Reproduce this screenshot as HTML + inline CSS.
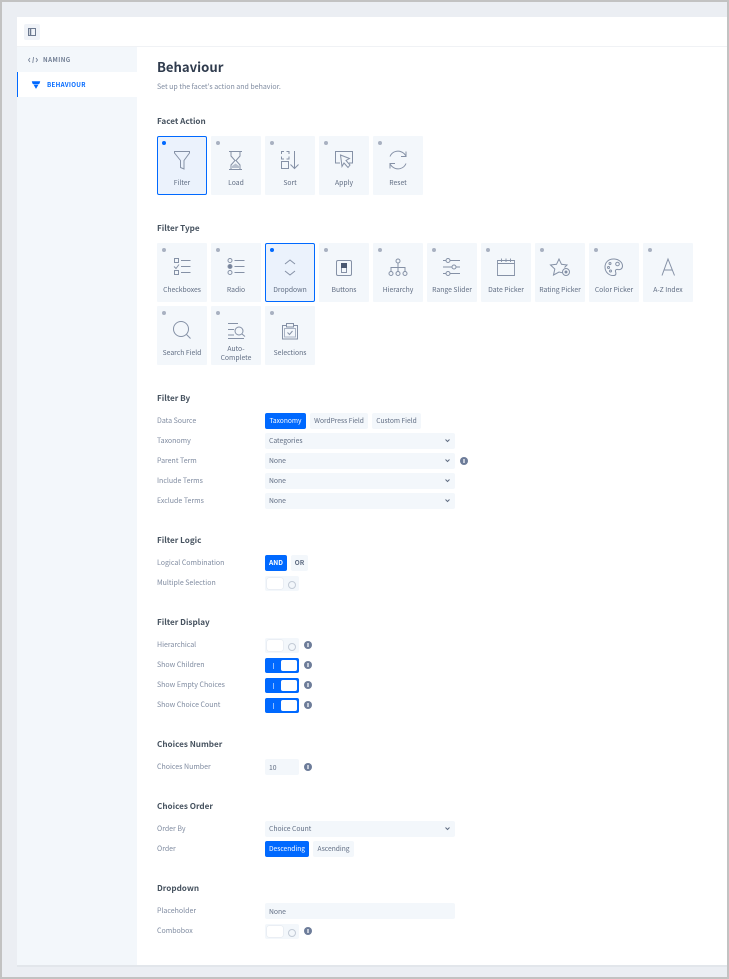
<!DOCTYPE html>
<html><head><meta charset="utf-8"><style>
html,body{margin:0;padding:0}
body{width:729px;height:979px;position:relative;overflow:hidden;background:#ebeef3;font-family:"Noto Sans CJK JP","Liberation Sans",sans-serif}
div,span{position:absolute;box-sizing:border-box}
#w{left:0;top:0;width:729px;height:979px;filter:blur(.25px)}
.t{white-space:nowrap;font-size:7px;line-height:12px;color:#7f8ba0}
.h{white-space:nowrap;font-size:8.15px;line-height:12px;font-weight:bold;color:#46525f;left:157px;margin-top:1px}
.l{left:157px}
.tile{width:50px;height:59px;background:#f3f7fb;border-radius:1px}
.tile.a{background:#ebf2fc;border:1px solid #0069ff;border-radius:2px}
.tile i{position:absolute;left:5px;top:5px;width:4px;height:4px;border-radius:50%;background:#a8b1c1}
.tile.a i{background:#0069ff;left:4px;top:4px}
.tile b{position:absolute;left:0;width:100%;text-align:center;font-weight:normal;font-size:6.8px;line-height:9px;color:#5f6c82;top:42px}
.tile.a b{left:0;top:41px}
.btn{height:16px;background:#f3f7fb;border-radius:2px;font-size:6.65px;line-height:15px;text-align:center;color:#5f6c82;white-space:nowrap}
.btn.on{background:#0069ff;color:#fff}
.sel{left:265px;width:190px;height:16px;background:#f3f7fb;border-radius:2px;font-size:6.8px;line-height:15px;padding-left:4px;color:#5f6c82}
.sel svg{position:absolute;left:180px;top:5px}
.tg{left:265px;width:34px;height:15px;background:#f3f7fb;border-radius:2px}
.tg u{position:absolute;left:2px;top:2px;width:16px;height:11px;background:#fff;border-radius:2px;box-shadow:0 0 1px #b9c2cf}
.tg s{position:absolute;left:23px;top:4.500px;width:6px;height:6px;border:1px solid #c3cbd6;border-radius:50%}
.tg.on{background:#0069ff}
.tg.on u{left:16px;box-shadow:none}
.tg.on s{left:8px;top:5px;width:1px;height:6px;border:0;border-radius:0;background:#8fbcff}
.inf{left:304px;width:8px;height:8px;border-radius:50%;background:#6d7c99}
.inf:after{content:"";position:absolute;left:3.2px;top:2px;width:1.6px;height:4px;background:#c5ccd9}
svg{position:absolute;left:0;top:0;overflow:visible}
</style></head><body><div id="w">
<div style="left:0;top:0;width:729px;height:2px;background:#c2c2c2"></div>
<div style="left:0;top:0;width:2px;height:979px;background:#c2c2c2"></div>
<div style="left:727px;top:0;width:2px;height:979px;background:#c2c2c2"></div>
<div style="left:0;top:977px;width:729px;height:2px;background:#c2c2c2"></div>

<div style="left:17px;top:17px;width:710px;height:950px;background:#fff;border-bottom:2px solid #e2e6eb"></div>
<div style="left:17px;top:46px;width:710px;height:1px;background:#f0f2f5"></div>
<div style="left:17px;top:47px;width:120px;height:918px;background:#f3f7fb"></div>
<div style="left:17px;top:72px;width:120px;height:25px;background:#fff;border-left:1px solid #0069ff"></div>
<div style="left:24px;top:24px;width:16px;height:16px;background:#f0f3f8;border-radius:2px"></div>

<span class="t" style="left:43px;top:54px;font-size:6.2px;font-weight:bold;letter-spacing:.45px;color:#6f7c92">NAMING</span>
<span class="t" style="left:47px;top:79px;font-size:6.2px;font-weight:bold;letter-spacing:.3px;color:#0069ff">BEHAVIOUR</span>

<span class="t" style="left:157px;top:59px;font-size:13.1px;line-height:15px;font-weight:bold;color:#2f3b4d">Behaviour</span>
<span class="t" style="left:157px;top:81px;font-size:7px;color:#7f8ba0">Set up the facet's action and behavior.</span>

<span class="h" style="top:115px">Facet Action</span>
<div class="tile a" style="left:157px;top:136px"><i></i><b>Filter</b></div>
<div class="tile" style="left:211px;top:136px"><i></i><b>Load</b></div>
<div class="tile" style="left:265px;top:136px"><i></i><b>Sort</b></div>
<div class="tile" style="left:319px;top:136px"><i></i><b>Apply</b></div>
<div class="tile" style="left:373px;top:136px"><i></i><b>Reset</b></div>

<span class="h" style="top:222px">Filter Type</span>
<div class="tile" style="left:157px;top:243px"><i></i><b>Checkboxes</b></div>
<div class="tile" style="left:211px;top:243px"><i></i><b>Radio</b></div>
<div class="tile a" style="left:265px;top:243px"><i></i><b>Dropdown</b></div>
<div class="tile" style="left:319px;top:243px"><i></i><b>Buttons</b></div>
<div class="tile" style="left:373px;top:243px"><i></i><b>Hierarchy</b></div>
<div class="tile" style="left:427px;top:243px"><i></i><b>Range Slider</b></div>
<div class="tile" style="left:481px;top:243px"><i></i><b>Date Picker</b></div>
<div class="tile" style="left:535px;top:243px"><i></i><b>Rating Picker</b></div>
<div class="tile" style="left:589px;top:243px"><i></i><b>Color Picker</b></div>
<div class="tile" style="left:643px;top:243px"><i></i><b>A-Z Index</b></div>
<div class="tile" style="left:157px;top:306px"><i></i><b>Search Field</b></div>
<div class="tile" style="left:211px;top:306px"><i></i><b style="top:38px">Auto-<br>Complete</b></div>
<div class="tile" style="left:265px;top:306px"><i></i><b>Selections</b></div>

<span class="h" style="top:392px">Filter By</span>
<span class="t l" style="top:415px">Data Source</span>
<div class="btn on" style="left:265px;top:413px;width:41px">Taxonomy</div>
<div class="btn" style="left:310px;top:413px;width:58px">WordPress Field</div>
<div class="btn" style="left:372px;top:413px;width:49px">Custom Field</div>
<span class="t l" style="top:435px">Taxonomy</span>
<div class="sel" style="top:433px">Categories<svg width="5" height="6"><path d="M.5 1.500L2.500 3.500L4.500 1.500" fill="none" stroke="#5f6c82"/></svg></div>
<span class="t l" style="top:455px">Parent Term</span>
<div class="sel" style="top:453px">None<svg width="5" height="6"><path d="M.5 1.500L2.500 3.500L4.500 1.500" fill="none" stroke="#5f6c82"/></svg></div>
<div class="inf" style="left:460px;top:457px"></div>
<span class="t l" style="top:475px">Include Terms</span>
<div class="sel" style="top:473px">None<svg width="5" height="6"><path d="M.5 1.500L2.500 3.500L4.500 1.500" fill="none" stroke="#5f6c82"/></svg></div>
<span class="t l" style="top:495px">Exclude Terms</span>
<div class="sel" style="top:493px">None<svg width="5" height="6"><path d="M.5 1.500L2.500 3.500L4.500 1.500" fill="none" stroke="#5f6c82"/></svg></div>

<span class="h" style="top:534px">Filter Logic</span>
<span class="t l" style="top:557px">Logical Combination</span>
<div class="btn on" style="left:265px;top:555px;width:22px;font-weight:bold">AND</div>
<div class="btn" style="left:291px;top:555px;width:17px;font-weight:bold">OR</div>
<span class="t l" style="top:577px">Multiple Selection</span>
<div class="tg" style="top:576px"><u></u><s></s></div>

<span class="h" style="top:616px">Filter Display</span>
<span class="t l" style="top:639px">Hierarchical</span>
<div class="tg" style="top:638px"><u></u><s></s></div><div class="inf" style="top:641px"></div>
<span class="t l" style="top:659px">Show Children</span>
<div class="tg on" style="top:658px"><u></u><s></s></div><div class="inf" style="top:661px"></div>
<span class="t l" style="top:679px">Show Empty Choices</span>
<div class="tg on" style="top:678px"><u></u><s></s></div><div class="inf" style="top:681px"></div>
<span class="t l" style="top:699px">Show Choice Count</span>
<div class="tg on" style="top:698px"><u></u><s></s></div><div class="inf" style="top:701px"></div>

<span class="h" style="top:738px">Choices Number</span>
<span class="t l" style="top:761px">Choices Number</span>
<div class="sel" style="top:759px;width:34px;line-height:16px">10</div><div class="inf" style="top:763px"></div>

<span class="h" style="top:800px">Choices Order</span>
<span class="t l" style="top:823px">Order By</span>
<div class="sel" style="top:821px">Choice Count<svg width="5" height="6"><path d="M.5 1.500L2.500 3.500L4.500 1.500" fill="none" stroke="#5f6c82"/></svg></div>
<span class="t l" style="top:843px">Order</span>
<div class="btn on" style="left:265px;top:841px;width:44px">Descending</div>
<div class="btn" style="left:313px;top:841px;width:41px">Ascending</div>

<span class="h" style="top:882px">Dropdown</span>
<span class="t l" style="top:905px">Placeholder</span>
<div class="sel" style="top:903px;line-height:16px">None</div>
<span class="t l" style="top:925px">Combobox</span>
<div class="tg" style="top:924px"><u></u><s></s></div><div class="inf" style="top:927px"></div>

<svg width="729" height="979" fill="none" stroke="#8591a6" stroke-width="1">
<g stroke="#6d7a90"><rect x="28.500" y="28.500" width="7" height="7" /><path d="M30.500 28.500V35.500" stroke-width="1.500"/></g>
<path d="M30 58L28.500 60L30 62M32.800 63L33.500 57M36 58L37.500 60L36 62" stroke="#6d7a90" stroke-width=".8"/>
<path d="M32 81.500H40L39 84H33ZM34 85H38L36 88.500Z" fill="#0069ff" stroke="#0069ff" stroke-width=".5"/>

<g transform="translate(157,136)"><path d="M17.500 15.500H32.500V17L27 24.500V33L23.500 31.500V24.500L17.500 17Z"/></g>
<g transform="translate(211,136)"><path d="M18 15.500H31M18 33.500H31M20 15.500V20L24 24.500L20 29V33.500M29 15.500V20L25 24.500L29 29V33.500"/><path d="M21 32V30L24.500 27.500L28 30V32Z" fill="#b7c0ce" stroke="none"/></g>
<g transform="translate(265,136)"><path d="M16.500 18V15.500H19M21.500 15.500H24V18M16.500 20.500V23H19M21.500 23H24V20.500"/><rect x="16.500" y="25.500" width="7" height="7"/><path d="M29.500 15V32.500M25.500 28.500L29.500 32.500L33.500 28.500"/></g>
<g transform="translate(319,136)"><path d="M21 27H16.500V15.500H33.500V27H30"/><path d="M21.500 19L30.500 22.500L27 24.500L31 29L29 31.500L25 27L23 30.500Z"/></g>
<g transform="translate(373,136)"><path d="M17 20.500C19 15.500 25.500 13 31 17.500L33 20M33 15.500V20.500H28"/><path d="M33 27.500C31 32.500 24.500 35 19 30.500L17 28M17 32.500V27.500H22"/></g>

<g transform="translate(157,243)"><rect x="17.500" y="15.500" width="4" height="4"/><rect x="17.500" y="27.500" width="4" height="4"/><path d="M17 23.500L19 25.500L22 21.500M24 17.500H33.500M24 23.500H33.500M24 29.500H33.500"/></g>
<g transform="translate(211,243)"><circle cx="19" cy="17.500" r="2"/><circle cx="19" cy="23.500" r="2" fill="#76839b"/><circle cx="19" cy="29.500" r="2"/><path d="M23.500 17.500H33.500M23.500 23.500H33.500M23.500 29.500H33.500"/></g>
<g transform="translate(265,243)"><path d="M20 21L25 17L30 21M20 28L25 32L30 28"/></g>
<g transform="translate(319,243)"><rect x="17.500" y="17.500" width="15" height="15" rx="1.500"/><rect x="22.500" y="20.500" width="5" height="9"/><rect x="22" y="20" width="6" height="5" fill="#4a5870" stroke="none"/></g>
<g transform="translate(373,243)"><circle cx="25" cy="18" r="2"/><circle cx="18" cy="30.500" r="2"/><circle cx="25" cy="30.500" r="2"/><circle cx="32" cy="30.500" r="2"/><path d="M25 20V28.500M18 28.500V24.500H32V28.500"/></g>
<g transform="translate(427,243)"><circle cx="21" cy="17.500" r="2"/><circle cx="27" cy="24" r="2"/><circle cx="21" cy="30.500" r="2"/><path d="M16 17.500H19M23 17.500H33M16 24H25M29 24H33M16 30.500H19M23 30.500H33"/></g>
<g transform="translate(481,243)"><path d="M16.500 17.500H33.500V32.500H16.500ZM16.500 20.500H33.500" stroke-width=".9"/><path d="M20.500 15.500V19M25 15.500V19M29.500 15.500V19" stroke-width=".9"/></g>
<g transform="translate(535,243)"><path d="M27.500 29.800L24 29L18.500 32L19.800 26L15.500 22L21.500 21.300L24 16L26.500 21.300L32 22L29.500 24.500"/><circle cx="31" cy="29" r="3.500"/><circle cx="31" cy="29" r="1" fill="#76839b"/></g>
<g transform="translate(589,243)"><path d="M25.500 16C19 15.500 16 20 16 24C16 29 20 33 25 32.500C27.500 32.300 27 30 26.500 28.500C26 27 27.500 26 29 26.500C31 27 33.500 26 33.500 23C33.500 19 29.500 16.300 25.500 16Z"/><circle cx="28.500" cy="21" r="1.800"/><circle cx="21" cy="20.500" r="1"/><circle cx="19.500" cy="24.500" r="1"/><circle cx="21.500" cy="28" r="1"/></g>
<g transform="translate(643,243)"><path d="M19 32.500L25 16L31.500 32.500M21 27H29.500"/></g>

<g transform="translate(157,306)"><circle cx="24" cy="23" r="7.500"/><path d="M29.500 28.500L33.500 32.500"/></g>
<g transform="translate(211,306)"><path d="M17 17.500H27M17 23.500H23M17 29H23M17 32.500H33"/><circle cx="28" cy="25" r="4"/><path d="M31 28L34 30.500"/></g>
<g transform="translate(265,306)"><path d="M21 19.500H17.500V33H32.500V19.500H29"/><rect x="21.500" y="17.500" width="7" height="3.500"/><rect x="19.500" y="22.500" width="11" height="8.500" stroke="#a9b3c4"/><path d="M22.500 26.500L24.500 28.500L27.500 25"/></g>
</svg>
</div></body></html>
